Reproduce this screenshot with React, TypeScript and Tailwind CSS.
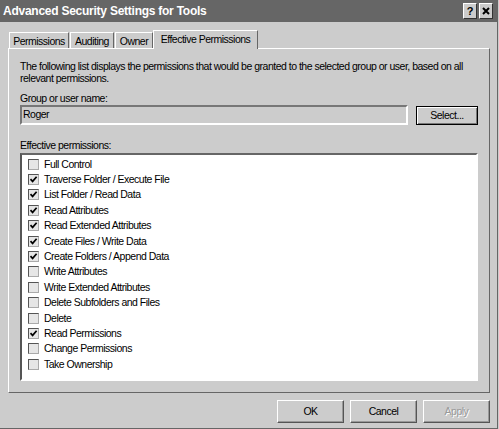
import type { ReactNode } from "react";

const font = "font-['Liberation_Sans',Arial,sans-serif]";

const perms: [string, boolean][] = [
  ["Full Control", false],
  ["Traverse Folder / Execute File", true],
  ["List Folder / Read Data", true],
  ["Read Attributes", true],
  ["Read Extended Attributes", true],
  ["Create Files / Write Data", true],
  ["Create Folders / Append Data", true],
  ["Write Attributes", false],
  ["Write Extended Attributes", false],
  ["Delete Subfolders and Files", false],
  ["Delete", false],
  ["Read Permissions", true],
  ["Change Permissions", false],
  ["Take Ownership", false],
];

function Check({ on }: { on: boolean }) {
  return (
    <span className="flex h-[11px] w-[11px] shrink-0 items-center justify-center border border-t-[#555] border-l-[#555] border-r-[#aaa] border-b-[#aaa] bg-[#e6e6e6]">
      {on ? (
        <svg width="9" height="9" viewBox="0 0 9 9">
          <path d="M1.5 4.2 L3.6 6.4 L7.6 1.8" fill="none" stroke="#000" strokeWidth="1.7" />
        </svg>
      ) : null}
    </span>
  );
}

function Tab({ children, w, active }: { children: ReactNode; w: string; active?: boolean }) {
  return (
    <div
      className={
        active
          ? `relative z-10 -mb-[1px] h-[19px] ${w} border-l border-t border-r border-l-white border-t-white border-r-[#666] bg-[#cccccc] pt-[2px] text-center leading-[12px]`
          : `h-[16px] ${w} border-l border-t border-r border-l-white border-t-white border-r-[#666] bg-[#cccccc] pt-[2px] text-center leading-[12px]`
      }
    >
      {children}
    </div>
  );
}

function Button({ children, disabled }: { children: ReactNode; disabled?: boolean }) {
  return (
    <div
      className={`flex h-[23px] w-[67px] items-center justify-center border border-t-white border-l-white border-r-[#555] border-b-[#555] shadow-[inset_-1px_-1px_0_#999] ${
        disabled ? "text-[#999] [text-shadow:1px_1px_0_#fff]" : "text-black"
      }`}
    >
      {children}
    </div>
  );
}

export default function App() {
  return (
    <div className={`flex h-[429px] w-[499px] bg-[#cccccc] ${font} text-[10.5px] tracking-[-0.5px] text-black`}>
      <div className="flex h-[429px] w-[498px] flex-col border-b border-r border-[#666]">
        {/* title bar */}
        <div className="flex h-[22px] shrink-0 items-center justify-between bg-[#666666] pl-[3px] pr-[4px]">
          <span className="text-[12px] font-bold tracking-[-0.25px] text-white">
            Advanced Security Settings for Tools
          </span>
          <div className="flex gap-[2px]">
            <div className="flex h-[16px] w-[14px] items-center justify-center border border-t-white border-l-white border-r-[#333] border-b-[#333] bg-[#cccccc] text-[11px] font-bold leading-none tracking-normal">
              ?
            </div>
            <div className="flex h-[16px] w-[14px] items-center justify-center border border-t-white border-l-white border-r-[#333] border-b-[#333] bg-[#cccccc]">
              <svg width="8" height="8" viewBox="0 0 8 8">
                <path d="M1 1 L7 7 M7 1 L1 7" stroke="#000" strokeWidth="2" />
              </svg>
            </div>
          </div>
        </div>

        {/* tabs */}
        <div className="ml-[8px] mt-[8px] flex items-end">
          <div className="ml-[1px]">
            <Tab w="w-[60px]">Permissions</Tab>
          </div>
          <div className="ml-[1px]">
            <Tab w="w-[44px]">Auditing</Tab>
          </div>
          <div className="ml-[1px]">
            <Tab w="w-[38px]">Owner</Tab>
          </div>
          <Tab w="w-[105px]" active>
            Effective Permissions
          </Tab>
        </div>

        {/* panel */}
        <div className="ml-[8px] flex h-[345px] w-[482px] flex-col border border-t-white border-l-white border-r-[#666] border-b-[#666] pl-[11px] pt-[11px]">
          <p className="leading-[12px]">
            The following list displays the permissions that would be granted to the selected group or user, based on all
            <br />
            relevant permissions.
          </p>
          <p className="mt-[8px] leading-[12px]">Group or user name:</p>
          <div className="mt-[1px] flex items-start">
            <div className="h-[20px] w-[388px] border-2 border-t-[#777] border-l-[#777] border-r-white border-b-white pl-[1px] leading-[15px]">
              Roger
            </div>
            <div className="ml-[8px] mt-[1px] flex h-[19px] w-[62px] items-center justify-center border border-black shadow-[inset_1px_1px_0_#fff,inset_-1px_-1px_0_#777]">
              Select...
            </div>
          </div>
          <p className="mt-[14px] leading-[12px]">Effective permissions:</p>
          <div className="mt-[2px] h-[228px] w-[458px] border-2 border-t-[#666] border-l-[#555] border-r-white border-b-white bg-white pl-[6px] pt-[1.5px]">
            {perms.map(([label, on]) => (
              <div key={label} className="flex h-[15.4px] items-center gap-[5px]">
                <Check on={on} />
                <span className="leading-[15px]">{label}</span>
              </div>
            ))}
          </div>
        </div>

        {/* buttons */}
        <div className="mt-[7px] flex justify-end gap-[6px] pr-[7px]">
          <Button>OK</Button>
          <Button>Cancel</Button>
          <Button disabled>Apply</Button>
        </div>
      </div>
    </div>
  );
}
